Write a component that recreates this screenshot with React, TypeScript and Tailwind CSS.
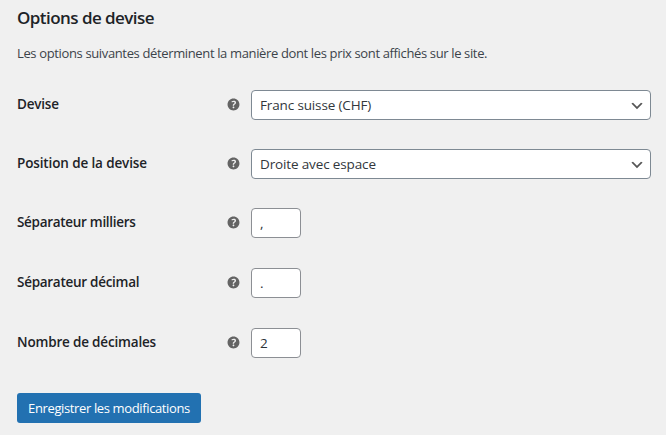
import type { ReactNode } from "react";

function HelpIcon() {
  return (
    <svg viewBox="0 0 20 20" className="-mt-px block h-[17px] w-[17px] shrink-0 fill-[#646464]" aria-hidden="true">
      <path d="M17 10c0-3.87-3.14-7-7-7-3.87 0-7 3.13-7 7s3.13 7 7 7c3.86 0 7-3.13 7-7zm-6.3 1.48H9.14v-.43c0-.38.08-.7.24-.98s.46-.57.88-.89c.41-.29.68-.53.81-.71.14-.18.2-.39.2-.62 0-.25-.09-.44-.28-.58-.19-.13-.45-.19-.79-.19-.58 0-1.25.19-2 .57l-.64-1.28c.87-.49 1.8-.74 2.77-.74.81 0 1.45.2 1.92.58.48.39.71.91.71 1.55 0 .43-.09.8-.29 1.11-.19.32-.57.67-1.11 1.06-.38.28-.61.49-.71.63-.1.15-.15.34-.15.57v.35zm-1.47 2.74c-.18-.17-.27-.42-.27-.73 0-.33.08-.58.26-.75s.43-.25.77-.25c.32 0 .57.09.75.26s.27.42.27.74c0 .3-.09.55-.27.72-.18.18-.43.27-.75.27-.33 0-.58-.09-.76-.26z" />
    </svg>
  );
}

function Row({ label, spacing, height, children }: { label: string; spacing: string; height: string; children: ReactNode }) {
  return (
    <div className={`flex items-start ${height}`}>
      <div className="flex h-[29px] w-[234px] items-center justify-between pr-[9px]">
        <span className={`whitespace-nowrap text-[13.5px] font-[550] text-[#1d2327] ${spacing}`}>{label}</span>
        <HelpIcon />
      </div>
      {children}
    </div>
  );
}

function Select({ value }: { value: string }) {
  return (
    <div className="flex h-[30px] w-[400px] items-center justify-between rounded-[4px] border border-[#7e8993] bg-white pl-2 pr-[5px]">
      <span className="whitespace-nowrap text-[13.5px] tracking-[-0.14px] text-[#32373c]">{value}</span>
      <svg viewBox="0 0 20 20" className="mt-px h-4 w-4 fill-[#555]" aria-hidden="true">
        <path d="M5 6l5 5 5-5 2 1-7 7-7-7 2-1z" />
      </svg>
    </div>
  );
}

function Field({ value }: { value: string }) {
  return (
    <input
      defaultValue={value}
      className="h-[30px] w-[50px] rounded-[4px] border border-[#8c8f94] bg-white px-2 text-[13.5px] text-[#2c3338] outline-none"
    />
  );
}

export default function App() {
  return (
    <main className="h-[435px] w-[666px] overflow-hidden bg-[#f0f0f0] pl-[17px] pt-[6px] font-['Open_Sans','Noto_Sans',sans-serif]">
      <h2 className="h-6 whitespace-nowrap text-[17px] font-[550] leading-6 tracking-[-0.55px] text-[#1d2327]">Options de devise</h2>
      <p className="mt-[13px] h-5 whitespace-nowrap text-[13px] leading-5 tracking-[-0.36px] text-[#3c434a]">
        Les options suivantes déterminent la manière dont les prix sont affichés sur le site.
      </p>
      <form className="mt-[27px]">
        <Row label="Devise" spacing="tracking-[-0.2px]" height="h-[59px]">
          <Select value="Franc suisse (CHF)" />
        </Row>
        <Row label="Position de la devise" spacing="tracking-[-0.13px]" height="h-[59px]">
          <Select value="Droite avec espace" />
        </Row>
        <Row label="Séparateur milliers" spacing="tracking-[-0.3px]" height="h-[60px]">
          <Field value="," />
        </Row>
        <Row label="Séparateur décimal" spacing="tracking-[-0.28px]" height="h-[60px]">
          <Field value="." />
        </Row>
        <Row label="Nombre de décimales" spacing="tracking-[-0.18px]" height="h-[65px]">
          <Field value="2" />
        </Row>
        <button type="button" className="flex h-[30px] w-[184px] items-center justify-center whitespace-nowrap rounded-[3px] bg-[#2271b1] pt-px text-[13px] tracking-[-0.37px] text-white">
          Enregistrer les modifications
        </button>
      </form>
    </main>
  );
}
